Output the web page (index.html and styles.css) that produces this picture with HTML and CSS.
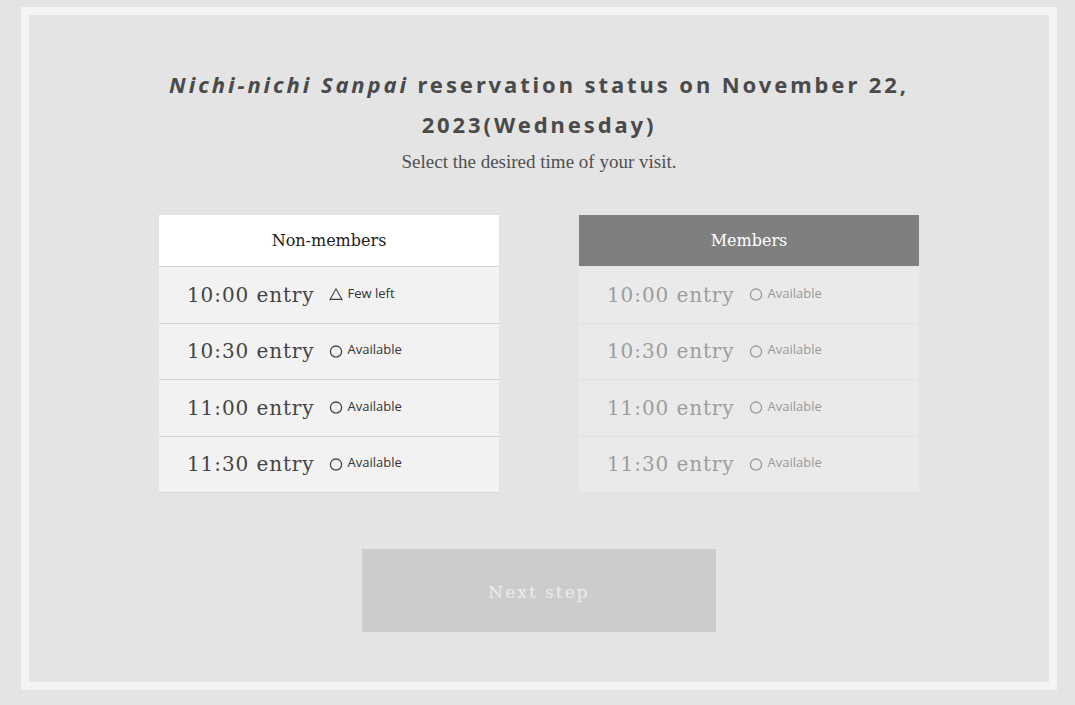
FILE: index.html
```html
<!DOCTYPE html>
<html lang="en">
<head>
<meta charset="utf-8">
<title>Reservation status</title>
<link rel="stylesheet" href="styles.css">
</head>
<body>
<div class="frame">
  <div class="panel">
    <h1 class="title"><em>Nichi-nichi Sanpai</em> reservation status on November 22, 2023(Wednesday)</h1>
    <p class="lead">Select the desired time of your visit.</p>
    <div class="tables">
      <div class="table">
        <div class="head">Non-members</div>
        <div class="row"><span class="time">10:00 entry</span><span class="status"><svg class="ico" viewBox="0 0 14 14"><path d="M7 1.8 L13 12.4 L1 12.4 Z" fill="none" stroke="currentColor" stroke-width="1.1"/></svg>Few left</span></div>
        <div class="row"><span class="time">10:30 entry</span><span class="status"><svg class="ico" viewBox="0 0 14 14"><circle cx="7" cy="7.6" r="5.6" fill="none" stroke="currentColor" stroke-width="1.3"/></svg>Available</span></div>
        <div class="row"><span class="time">11:00 entry</span><span class="status"><svg class="ico" viewBox="0 0 14 14"><circle cx="7" cy="7.6" r="5.6" fill="none" stroke="currentColor" stroke-width="1.3"/></svg>Available</span></div>
        <div class="row"><span class="time">11:30 entry</span><span class="status"><svg class="ico" viewBox="0 0 14 14"><circle cx="7" cy="7.6" r="5.6" fill="none" stroke="currentColor" stroke-width="1.3"/></svg>Available</span></div>
      </div>
      <div class="table disabled">
        <div class="head">Members</div>
        <div class="row"><span class="time">10:00 entry</span><span class="status"><svg class="ico" viewBox="0 0 14 14"><circle cx="7" cy="7.6" r="5.6" fill="none" stroke="currentColor" stroke-width="1.3"/></svg>Available</span></div>
        <div class="row"><span class="time">10:30 entry</span><span class="status"><svg class="ico" viewBox="0 0 14 14"><circle cx="7" cy="7.6" r="5.6" fill="none" stroke="currentColor" stroke-width="1.3"/></svg>Available</span></div>
        <div class="row"><span class="time">11:00 entry</span><span class="status"><svg class="ico" viewBox="0 0 14 14"><circle cx="7" cy="7.6" r="5.6" fill="none" stroke="currentColor" stroke-width="1.3"/></svg>Available</span></div>
        <div class="row"><span class="time">11:30 entry</span><span class="status"><svg class="ico" viewBox="0 0 14 14"><circle cx="7" cy="7.6" r="5.6" fill="none" stroke="currentColor" stroke-width="1.3"/></svg>Available</span></div>
      </div>
    </div>
    <button class="next" type="button" disabled>Next step</button>
  </div>
</div>
</body>
</html>
```
FILE: styles.css
```css
html, body {
  margin: 0;
  padding: 0;
  background: #e4e4e4;
}
body {
  padding: 7px 18px 15px 21px;
  font-family: "Liberation Serif", serif;
}
.frame {
  width: 1036px;
  height: 683px;
  box-sizing: border-box;
  border: 8px solid #f4f4f4;
  background: #e4e4e4;
}
.panel {
  display: flex;
  flex-direction: column;
  align-items: center;
  padding-top: 49px;
}
.title {
  margin: 0;
  width: 780px;
  text-align: center;
  font-family: "Noto Sans", sans-serif;
  font-weight: 700;
  font-size: 22px;
  line-height: 40px;
  letter-spacing: 2.9px;
  color: #4a4a4a;
}
.title em {
  font-style: italic;
}
.lead {
  margin: 0;
  padding-top: 6px;
  font-family: "Liberation Serif", serif;
  font-size: 19px;
  line-height: 24px;
  color: #505050;
}
.tables {
  display: flex;
  gap: 80px;
  margin-top: 41px;
}
.table {
  width: 340px;
  background: #f2f2f2;
}
.head {
  height: 51px;
  display: flex;
  align-items: center;
  justify-content: center;
  background: #ffffff;
  border-bottom: 1px solid #d6d6d6;
  font-family: "DejaVu Serif", serif;
  font-size: 16px;
  color: #222;
}
.row {
  height: 55.5px;
  display: flex;
  align-items: center;
  padding-left: 28px;
  border-bottom: 1px solid #d6d6d6;
  color: #444;
}
.time {
  font-family: "DejaVu Serif", serif;
  font-size: 20px;
  letter-spacing: 0.9px;
}
.status {
  display: flex;
  align-items: center;
  margin-left: 14px;
  margin-top: -4px;
  font-family: "Open Sans", sans-serif;
  font-size: 13px;
  color: #333;
}
.ico {
  width: 14px;
  height: 14px;
  margin-right: 5px;
  margin-top: 3px;
  color: #444;
}
.disabled {
  background: #eaeaea;
}
.disabled .head {
  background: #7f7f7f;
  color: #ffffff;
  border-bottom-color: #e4e4e4;
}
.disabled .row {
  color: #9d9d9d;
  border-bottom-color: #e0e0e0;
}
.disabled .status,
.disabled .ico {
  color: #999;
}
.next {
  margin-top: 56px;
  padding-top: 3px;
  width: 354px;
  height: 83px;
  border: none;
  background: #cccccc;
  color: #ececec;
  font-family: "DejaVu Serif", serif;
  font-size: 17px;
  letter-spacing: 2px;
}
```
